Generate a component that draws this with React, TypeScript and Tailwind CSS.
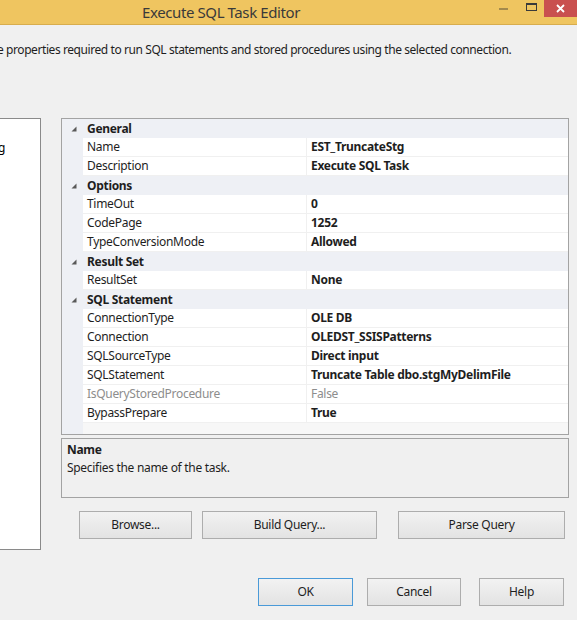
import React from 'react';

type Row =
  | { kind: 'cat'; label: string }
  | { kind: 'prop'; name: string; value: string; disabled?: boolean };

const rows: Row[] = [
  { kind: 'cat', label: 'General' },
  { kind: 'prop', name: 'Name', value: 'EST_TruncateStg' },
  { kind: 'prop', name: 'Description', value: 'Execute SQL Task' },
  { kind: 'cat', label: 'Options' },
  { kind: 'prop', name: 'TimeOut', value: '0' },
  { kind: 'prop', name: 'CodePage', value: '1252' },
  { kind: 'prop', name: 'TypeConversionMode', value: 'Allowed' },
  { kind: 'cat', label: 'Result Set' },
  { kind: 'prop', name: 'ResultSet', value: 'None' },
  { kind: 'cat', label: 'SQL Statement' },
  { kind: 'prop', name: 'ConnectionType', value: 'OLE DB' },
  { kind: 'prop', name: 'Connection', value: 'OLEDST_SSISPatterns' },
  { kind: 'prop', name: 'SQLSourceType', value: 'Direct input' },
  { kind: 'prop', name: 'SQLStatement', value: 'Truncate Table dbo.stgMyDelimFile' },
  { kind: 'prop', name: 'IsQueryStoredProcedure', value: 'False', disabled: true },
  { kind: 'prop', name: 'BypassPrepare', value: 'True' },
];

const font = { fontFamily: '"Noto Sans", "Open Sans", Arial, sans-serif' };

const Expander = () => (
  <svg width="6" height="6" viewBox="0 0 6 6" className="block">
    <polygon points="5.5,0.5 5.5,5.5 0.5,5.5" fill="#595959" />
  </svg>
);

const Btn = ({ label, w, focus }: { label: string; w: string; focus?: boolean }) => (
  <button
    className={`${w} h-[28px] flex items-center justify-center text-[12px] tracking-[-0.3px] text-[#1e1e1e] bg-gradient-to-b from-[#f2f2f2] to-[#e3e3e3] border ${
      focus ? 'border-[#4a9ad8]' : 'border-[#adadad]'
    }`}
  >
    {label}
  </button>
);

const App = () => {
  return (
    <div className="w-[577px] h-[620px] bg-[#f0f0f0] overflow-hidden flex flex-col" style={font}>
      {/* title bar */}
      <div className="h-[25px] shrink-0 bg-[#efc560] border-b border-[#d8ad4d] flex items-start">
        <div className="pl-[142px] pt-[1px] text-[15px] tracking-[-0.4px] text-[#3a3a3a] leading-[22px]">
          Execute SQL Task Editor
        </div>
        <div className="ml-auto flex items-start">
          <div className="w-[9px] h-[2px] bg-[#a48a4c] mt-[8px] mr-[18px]" />
          <div className="w-[11px] h-[8px] border border-[#3a3a3a] border-t-2 mt-[3px] mr-[7px]" />
          <div className="w-[33px] h-[17px] bg-[#c9504f] flex items-center justify-center">
            <svg width="9" height="9" viewBox="0 0 9 9">
              <path d="M1 1 L8 8 M8 1 L1 8" stroke="#fff" strokeWidth="1.8" />
            </svg>
          </div>
        </div>
      </div>

      {/* subtitle */}
      <div className="mt-[17px] ml-[-3px] text-[12px] tracking-[-0.42px] text-[#1e1e1e] leading-[16px] whitespace-nowrap">
        e properties required to run SQL statements and stored procedures using the selected connection.
      </div>

      {/* main */}
      <div className="flex mt-[60px]">
        <div className="w-[43px] h-[432px] ml-[-2px] bg-white border border-[#8a8a8a] text-[12px] pt-[21px] shrink-0 overflow-hidden">
          <div className="ml-[-1px] leading-[16px]">g</div>
        </div>

        <div className="ml-[20px] w-[508px] flex flex-col">
          {/* property grid */}
          <div className="h-[317px] border border-[#a3a3a3] bg-[#eef0f5] flex flex-col text-[12px] tracking-[-0.3px]">
            {rows.map((r, i) =>
              r.kind === 'cat' ? (
                <div key={i} className="h-[19px] flex items-center font-bold text-[#1e1e1e]">
                  <div className="w-[21px] flex justify-center pl-[2px]">
                    <Expander />
                  </div>
                  <div className="pl-[4px]">{r.label}</div>
                </div>
              ) : (
                <div key={i} className="h-[19px] flex">
                  <div className="w-[21px] shrink-0" />
                  <div
                    className={`w-[224px] shrink-0 bg-white border-b border-r border-[#f0f0f0] pl-[4px] leading-[18px] ${
                      r.disabled ? 'text-[#8d8d8d]' : 'text-[#1e1e1e]'
                    }`}
                  >
                    {r.name}
                  </div>
                  <div
                    className={`flex-1 bg-white border-b border-[#f0f0f0] pl-[4px] leading-[18px] ${
                      r.disabled ? 'text-[#8d8d8d]' : 'font-bold text-[#1e1e1e]'
                    }`}
                  >
                    {r.value}
                  </div>
                </div>
              )
            )}
            <div className="flex-1 flex">
              <div className="w-[21px]" />
              <div className="flex-1 bg-[#f7f7f7]" />
            </div>
          </div>

          {/* help box */}
          <div className="mt-[3px] h-[60px] border border-[#a3a3a3] bg-[#f0f0f0] px-[5px] pt-[2px] text-[12px] tracking-[-0.3px] text-[#1e1e1e] leading-[18px]">
            <div className="font-bold">Name</div>
            <div>Specifies the name of the task.</div>
          </div>

          {/* buttons */}
          <div className="flex mt-[13px]">
            <div className="ml-[18px]">
              <Btn label="Browse..." w="w-[113px]" />
            </div>
            <div className="ml-[10px]">
              <Btn label="Build Query..." w="w-[175px]" />
            </div>
            <div className="ml-[21px]">
              <Btn label="Parse Query" w="w-[167px]" />
            </div>
          </div>
        </div>
      </div>

      {/* dialog buttons */}
      <div className="flex mt-[28px] pl-[258px]">
        <Btn label="OK" w="w-[95px]" focus />
        <div className="ml-[14px]">
          <Btn label="Cancel" w="w-[94px]" />
        </div>
        <div className="ml-[18px]">
          <Btn label="Help" w="w-[85px]" />
        </div>
      </div>
    </div>
  );
};

export default App;
